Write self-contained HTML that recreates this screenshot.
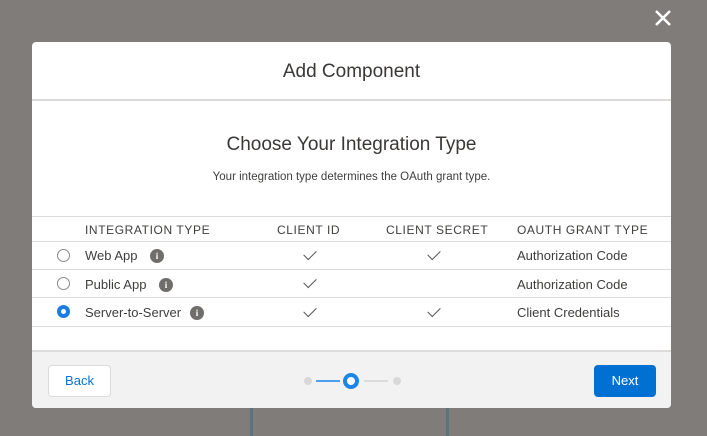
<!DOCTYPE html>
<html><head><style>
*{margin:0;padding:0;box-sizing:border-box}
body{width:707px;height:436px;background:#7f7c7a;font-family:"Liberation Sans",sans-serif;position:relative;overflow:hidden;color:#16325c}
.a{position:absolute}
.modal{left:32px;top:42px;width:639px;height:366px;background:#fff;border-radius:4px;overflow:hidden}
.t{font-size:13px;color:#3e3e3c;white-space:nowrap}
.h{font-size:12px;color:#3e3e3c;letter-spacing:0.6px;white-space:nowrap}
.line{left:0;width:639px;height:1px;background:#dddbda}
.radio{width:13px;height:13px;border-radius:50%;border:1px solid #8a8a8a;background:#fff}
.info{width:14px;height:14px;border-radius:50%;background:#706e6b;color:#fff;font-size:9px;font-weight:bold;text-align:center;line-height:14px;font-family:"Liberation Serif",serif}
.chk{width:12px;height:7px;border-left:1.5px solid #555;border-bottom:1.5px solid #555;transform:rotate(-45deg)}
</style></head><body>
<div class="a" style="left:250px;top:400px;width:3px;height:36px;background:#5c7480"></div>
<div class="a" style="left:446px;top:400px;width:3px;height:36px;background:#5c7480"></div>
<svg class="a" style="left:654px;top:9px" width="18" height="18"><path d="M2 2L16 16M16 2L2 16" stroke="#fff" stroke-width="2.6"/></svg>
<div class="a modal">
 <div class="a t" style="left:0;width:639px;text-align:center;top:19px;font-size:19px;color:#3a3836">Add Component</div>
 <div class="a line" style="top:57px;height:2px"></div>
 <div class="a t" style="left:0;width:639px;text-align:center;top:92px;font-size:19px;color:#3a3836">Choose Your Integration Type</div>
 <div class="a t" style="left:0;width:639px;text-align:center;top:129px;font-size:11.5px">Your integration type determines the OAuth grant type.</div>
 <div class="a line" style="top:174px"></div>
 <div class="a h" style="left:53px;top:181px">INTEGRATION TYPE</div>
 <div class="a h" style="left:245px;top:181px">CLIENT ID</div>
 <div class="a h" style="left:354px;top:181px">CLIENT SECRET</div>
 <div class="a h" style="left:485px;top:181px">OAUTH GRANT TYPE</div>
 <div class="a line" style="top:199px"></div>
 <div class="a radio" style="left:25px;top:207px"></div>
 <div class="a t" style="left:53px;top:206px">Web App</div>
 <div class="a info" style="left:118px;top:207px">i</div>
 <div class="a chk" style="left:272px;top:208px"></div>
 <div class="a chk" style="left:396px;top:208px"></div>
 <div class="a t" style="left:485px;top:206px">Authorization Code</div>
 <div class="a line" style="top:227px"></div>
 <div class="a radio" style="left:25px;top:235px"></div>
 <div class="a t" style="left:53px;top:235px">Public App</div>
 <div class="a info" style="left:127px;top:236px">i</div>
 <div class="a chk" style="left:272px;top:236px"></div>
 <div class="a t" style="left:485px;top:235px">Authorization Code</div>
 <div class="a line" style="top:255px"></div>
 <div class="a radio" style="left:25px;top:263px;border:4px solid #1b7ce4"></div>
 <div class="a t" style="left:53px;top:263px">Server-to-Server</div>
 <div class="a info" style="left:158px;top:264px">i</div>
 <div class="a chk" style="left:272px;top:265px"></div>
 <div class="a chk" style="left:396px;top:265px"></div>
 <div class="a t" style="left:485px;top:263px">Client Credentials</div>
 <div class="a line" style="top:284px"></div>
 <div class="a" style="left:0;top:308px;width:639px;height:58px;background:#f3f2f2;border-top:2px solid #dddbda"></div>
 <div class="a" style="left:16px;top:323px;width:63px;height:32px;background:#fff;border:1px solid #dddbda;border-radius:4px;color:#0b6fd1;font-size:13px;text-align:center;line-height:30px">Back</div>
 <div class="a" style="left:272px;top:335px;width:8px;height:8px;border-radius:50%;background:#d8d8d8"></div>
 <div class="a" style="left:284px;top:338px;width:24px;height:2px;background:#4aa0ee"></div>
 <div class="a" style="left:311px;top:331px;width:16px;height:16px;border-radius:50%;border:4px solid #1b85e8;background:#fff"></div>
 <div class="a" style="left:332px;top:338px;width:24px;height:2px;background:#dcdcdc"></div>
 <div class="a" style="left:361px;top:335px;width:8px;height:8px;border-radius:50%;background:#d8d8d8"></div>
 <div class="a" style="left:562px;top:323px;width:62px;height:32px;background:#0070d2;border-radius:4px;color:#fff;font-size:13px;text-align:center;line-height:32px">Next</div>
</div>
</body></html>
